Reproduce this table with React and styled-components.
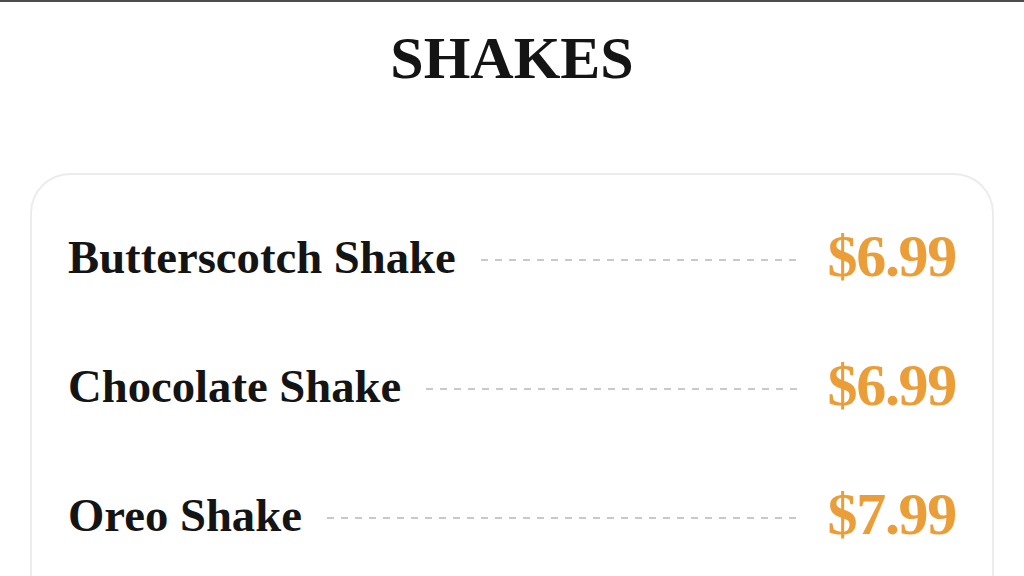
import React from "react";
import styled, { createGlobalStyle } from "styled-components";

const GlobalStyle = createGlobalStyle`
  body {
    margin: 0;
    background: #ffffff;
    font-family: "Liberation Serif", "DejaVu Serif", serif;
  }
`;

const Page = styled.div`
  height: 576px;
  border-top: 2px solid #4d4d4d;
  padding: 26px 30px 0 30px;
  box-sizing: border-box;
  overflow: hidden;
`;

const Title = styled.h1`
  margin: 0;
  text-align: center;
  font-size: 60px;
  line-height: 60px;
  font-weight: 700;
  color: #141414;
`;

const Card = styled.div`
  margin-top: 85px;
  border: 2px solid #ececec;
  border-bottom: none;
  border-radius: 40px 40px 0 0;
  padding: 17px 36px 0 36px;
  display: flex;
  flex-direction: column;
`;

const Row = styled.div`
  height: 129px;
  flex-shrink: 0;
  display: flex;
  align-items: center;
  gap: 25px;
`;

const Name = styled.span`
  font-size: 46.7px;
  font-weight: 700;
  color: #141414;
  white-space: nowrap;
`;

const Dots = styled.div`
  flex: 1;
  height: 2px;
  margin-top: 6px;
  background: repeating-linear-gradient(
    to right,
    #c9c9c9 0 7px,
    transparent 7px 14px
  );
`;

const Price = styled.span`
  font-size: 60px;
  font-weight: 700;
  color: #eb9e38;
  letter-spacing: -1.3px;
  white-space: nowrap;
`;

const items = [
  { name: "Butterscotch Shake", price: "$6.99" },
  { name: "Chocolate Shake", price: "$6.99" },
  { name: "Oreo Shake", price: "$7.99" },
];

const App = () => {
  return (
    <>
      <GlobalStyle />
      <Page>
        <Title>SHAKES</Title>
        <Card>
          {items.map((item) => (
            <Row key={item.name}>
              <Name>{item.name}</Name>
              <Dots />
              <Price>{item.price}</Price>
            </Row>
          ))}
        </Card>
      </Page>
    </>
  );
};

export default App;
